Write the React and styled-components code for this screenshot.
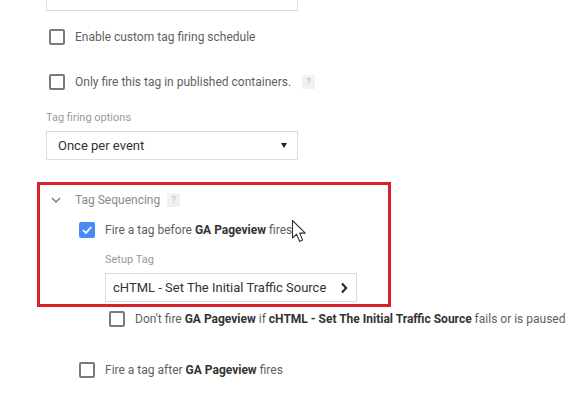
import React from 'react'
import styled, { createGlobalStyle } from 'styled-components'

const Global = createGlobalStyle`
  body {
    margin: 0;
    background: #fff;
    font-family: Roboto, "Liberation Sans", sans-serif;
  }
`

function Checkbox({ checked }) {
  return (
    <Box checked={checked}>
      {checked && (
        <svg width="12" height="12" viewBox="0 0 12 12">
          <polyline points="2,6.2 5,9 10.2,3" fill="none" stroke="#fff" strokeWidth="1.8" />
        </svg>
      )}
    </Box>
  )
}

function Help() {
  return <HelpBox>?</HelpBox>
}

function App() {
  return (
    <Page>
      <Global />
      <TopInput />

      <CheckRow top={18} left={3}>
        <Checkbox />
        <Text>Enable custom tag firing schedule</Text>
      </CheckRow>

      <CheckRow top={29} left={3}>
        <Checkbox />
        <Text>Only fire this tag in published containers.</Text>
        <Help />
      </CheckRow>

      <Label top={21}>Tag firing options</Label>
      <Select>
        <span>Once per event</span>
        <Caret />
      </Select>

      <Highlight>
        <Header>
          <svg width="10" height="6" viewBox="0 0 10 6">
            <polyline points="1,1 5,5 9,1" fill="none" stroke="#777" strokeWidth="1.4" />
          </svg>
          <HeaderText>Tag Sequencing</HeaderText>
          <Help />
        </Header>

        <CheckRow top={14} left={39}>
          <Checkbox checked />
          <Text>Fire a tag before <b>GA Pageview</b> fires</Text>
        </CheckRow>

        <Indent>
          <Label top={15}>Setup Tag</Label>
          <TagInput>
            <span>cHTML - Set The Initial Traffic Source</span>
            <svg width="8" height="12" viewBox="0 0 8 12">
              <polyline points="2,1.5 6.2,6 2,10.5" fill="none" stroke="#222" strokeWidth="2" />
            </svg>
          </TagInput>
        </Indent>
      </Highlight>

      <CheckRow top={4} left={63}>
        <Checkbox />
        <Text>
          Don't fire <b>GA Pageview</b> if <b>cHTML - Set The Initial Traffic Source</b> fails or is paused
        </Text>
      </CheckRow>

      <CheckRow top={35} left={33}>
        <Checkbox />
        <Text>Fire a tag after <b>GA Pageview</b> fires</Text>
      </CheckRow>

      <Cursor width="20" height="26" viewBox="0 0 20 26">
        <path
          d="M1.5 1.5 L1.5 19 L5.6 15.2 L8.6 22.4 L11.6 21.1 L8.7 14.1 L14.3 14.1 Z"
          fill="#fff"
          stroke="#333"
          strokeWidth="1.1"
          strokeLinejoin="round"
        />
      </Cursor>
    </Page>
  )
}

export default App

const Page = styled.div`
  position: relative;
  width: 585px;
  height: 397px;
  padding-left: 46px;
  box-sizing: border-box;
  overflow: hidden;
`

const TopInput = styled.div`
  width: 252px;
  height: 11px;
  box-sizing: border-box;
  border: 1px solid #dcdcdc;
  border-top: none;
`

const CheckRow = styled.div`
  display: flex;
  align-items: center;
  height: 16px;
  margin-top: ${p => p.top}px;
  padding-left: ${p => p.left}px;
  gap: 10px;
`

const Box = styled.div`
  width: 16px;
  height: 16px;
  flex: none;
  box-sizing: border-box;
  border-radius: 2px;
  border: ${p => (p.checked ? 'none' : '2px solid #7a7a7a')};
  background: ${p => (p.checked ? '#4a8af4' : '#fff')};
  display: flex;
  align-items: center;
  justify-content: center;
`

const Text = styled.span`
  font-size: 12px;
  color: #5f5f5f;
  white-space: nowrap;

  b {
    font-weight: 700;
    color: #333;
  }
`

const HelpBox = styled.span`
  width: 13px;
  height: 14px;
  margin-left: 1px;
  background: #f1f1f1;
  color: #b5b5b5;
  font-size: 9px;
  display: flex;
  align-items: center;
  justify-content: center;
`

const Label = styled.div`
  margin-top: ${p => p.top}px;
  font-size: 11px;
  line-height: 14px;
  color: #9a9a9a;
`

const Select = styled.div`
  margin-top: 6px;
  width: 252px;
  height: 29px;
  box-sizing: border-box;
  border: 1px solid #dcdcdc;
  display: flex;
  align-items: center;
  justify-content: space-between;
  padding: 0 10px 0 11px;
  font-size: 13px;
  color: #333;
`

const Caret = styled.span`
  width: 0;
  height: 0;
  border-left: 3px solid transparent;
  border-right: 3px solid transparent;
  border-top: 5px solid #222;
`

const Highlight = styled.div`
  margin-top: 22px;
  margin-left: -9px;
  width: 354px;
  height: 125px;
  box-sizing: border-box;
  border: 3px solid #d9202b;
  padding-top: 7px;
`

const Header = styled.div`
  display: flex;
  align-items: center;
  height: 16px;
  padding-left: 11px;
`

const HeaderText = styled.span`
  font-size: 12px;
  color: #8a8a8a;
  margin-left: 14px;
  margin-right: 6px;
`

const Indent = styled.div`
  padding-left: 65px;
`

const TagInput = styled.div`
  margin-top: 6px;
  width: 252px;
  height: 29px;
  box-sizing: border-box;
  border: 1px solid #dcdcdc;
  display: flex;
  align-items: center;
  justify-content: space-between;
  padding: 0 8px 0 7px;
  font-size: 13px;
  color: #333;
  white-space: nowrap;
`

const Cursor = styled.svg`
  position: absolute;
  left: 291px;
  top: 219px;
`
